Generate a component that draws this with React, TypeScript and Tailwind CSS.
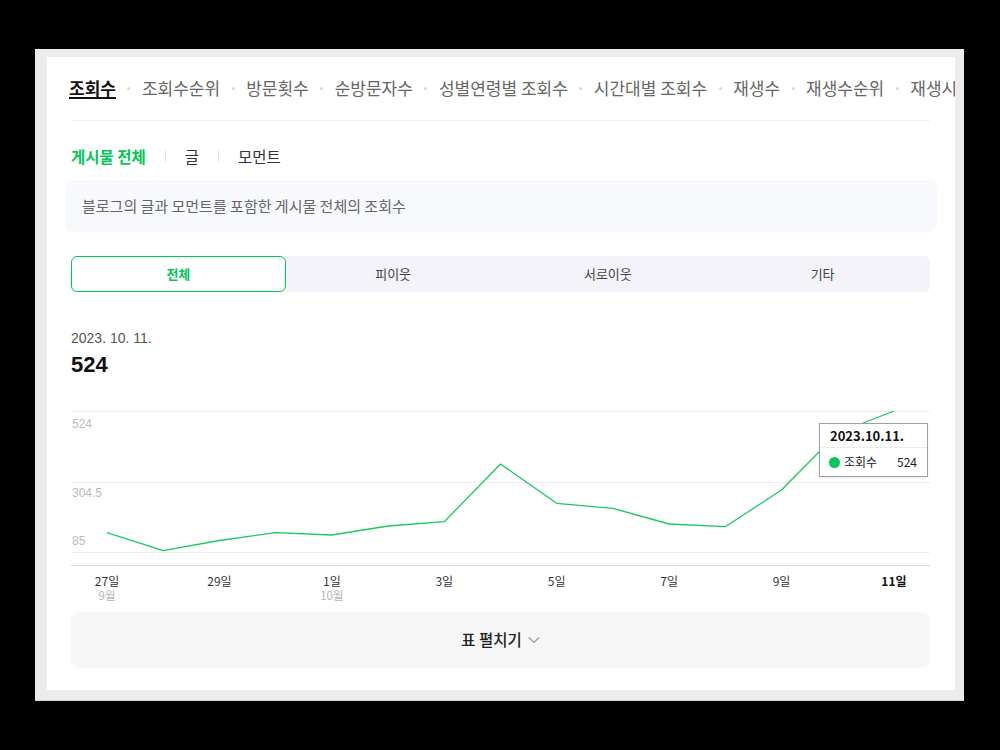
import React from "react";

const navItems = ["조회수", "조회수순위", "방문횟수", "순방문자수", "성별연령별 조회수", "시간대별 조회수", "재생수", "재생수순위", "재생시간"];
const ys = [127.7, 145.7, 135.5, 127.7, 130, 121, 116.7, 59, 98.3, 103.3, 119, 121.7, 85, 28, 6];
const xAt = (i: number) => 36 + i * 56.21;
const xLabels: { i: number; d: string; m?: string; bold?: boolean }[] = [
  { i: 0, d: "27일", m: "9월" },
  { i: 2, d: "29일" },
  { i: 4, d: "1일", m: "10월" },
  { i: 6, d: "3일" },
  { i: 8, d: "5일" },
  { i: 10, d: "7일" },
  { i: 12, d: "9일" },
  { i: 14, d: "11일", bold: true },
];

export default function App() {
  const pts = ys.map((y, i) => `${xAt(i).toFixed(1)},${y}`).join(" ");
  return (
    <div className="w-[1000px] h-[750px] bg-black pt-[49px] pl-[35px]" style={{ fontFamily: '"Noto Sans CJK KR", "Noto Sans", sans-serif' }}>
      <div className="w-[929px] h-[651px] bg-[#ececec] pt-[8px] pl-[12px] shadow-[0_1px_0_#cfcfcf]">
        <div className="w-[908px] h-[633px] bg-white pl-[24px] pr-[25px] overflow-hidden">
          {/* top nav */}
          <div className="-mr-[25px] -ml-[2px] overflow-hidden pt-[21px] pb-[6px]">
            <div className="flex items-center whitespace-nowrap text-[17px] leading-[20px]">
              {navItems.map((t, i) => (
                <React.Fragment key={t}>
                  {i > 0 && <span className="mx-[11.5px] w-[3px] h-[3px] rounded-full bg-[#d5d5d5] shrink-0" />}
                  {i === 0 ? (
                    <span className="font-bold text-[#111] underline decoration-2 underline-offset-[2px]">{t}</span>
                  ) : (
                    <span className="text-[#666]">{t}</span>
                  )}
                </React.Fragment>
              ))}
            </div>
          </div>
          <div className="mt-[16px] border-t border-[#f0f0f0]" />

          {/* sub tabs */}
          <div className="mt-[25px] flex items-center text-[15.5px] leading-[20px]">
            <span className="font-bold text-[#03c75a]">게시물 전체</span>
            <span className="mx-[19px] w-px h-[12px] bg-[#e2e2e2]" />
            <span className="text-[#333]">글</span>
            <span className="mx-[19px] w-px h-[12px] bg-[#e2e2e2]" />
            <span className="text-[#333]">모먼트</span>
          </div>

          {/* info box */}
          <div className="mt-[14px] -ml-[6px] -mr-[7px] h-[52px] rounded-lg bg-[#f8f9fc] pl-[17px] flex items-center text-[15px] text-[#666]">
            블로그의 글과 모먼트를 포함한 게시물 전체의 조회수
          </div>

          {/* segmented */}
          <div className="mt-[24px] h-[36px] rounded-md bg-[#f3f3f9] grid grid-cols-4 text-[13px]">
            <div className="rounded-md bg-white border border-[#03c75a] flex items-center justify-center font-bold text-[#03c75a]">전체</div>
            <div className="flex items-center justify-center text-[#444]">피이웃</div>
            <div className="flex items-center justify-center text-[#444]">서로이웃</div>
            <div className="flex items-center justify-center text-[#444]">기타</div>
          </div>

          {/* value */}
          <div className="mt-[36px] text-[14px] leading-[20px] text-[#555]" style={{ fontFamily: '"Liberation Sans", Arial, sans-serif' }}>2023. 10. 11.</div>
          <div className="mt-[3px] text-[22px] leading-[28px] font-bold text-[#111]" style={{ fontFamily: '"Liberation Sans", Arial, sans-serif' }}>524</div>

          {/* chart */}
          <div className="relative mt-[26px] h-[200px]">
            <svg width="859" height="200" viewBox="0 0 859 200" className="block">
              <line x1="0" x2="859" y1="6.5" y2="6.5" stroke="#eeeeee" />
              <line x1="0" x2="859" y1="77.5" y2="77.5" stroke="#eeeeee" />
              <line x1="0" x2="859" y1="147.5" y2="147.5" stroke="#eeeeee" />
              <line x1="0" x2="859" y1="160.5" y2="160.5" stroke="#dcdcdc" />
              <g fill="#bbbbbb" fontSize="12" style={{ fontFamily: '"Liberation Sans", Arial, sans-serif' }}>
                <text x="1" y="19" dominantBaseline="central">524</text>
                <text x="1" y="88" dominantBaseline="central">304.5</text>
                <text x="1" y="136" dominantBaseline="central">85</text>
              </g>
              <polyline points={pts} fill="none" stroke="#1cc860" strokeWidth="1.3" strokeLinejoin="round" />
              <g fontSize="12" textAnchor="middle">
                {xLabels.map((l) => (
                  <React.Fragment key={l.d}>
                    <text x={xAt(l.i)} y="175.5" dominantBaseline="central" fill={l.bold ? "#111" : "#333"} fontWeight={l.bold ? 700 : 400}>{l.d}</text>
                    {l.m && <text x={xAt(l.i)} y="190" fontSize="11.5" dominantBaseline="central" fill="#b5b5b5">{l.m}</text>}
                  </React.Fragment>
                ))}
              </g>
            </svg>
            <div className="absolute left-[748px] top-[18px] w-[109px] h-[54px] bg-white border border-[#a0a0a0] shadow-[0_1px_2px_rgba(0,0,0,0.08)]">
              <div className="h-[24px] pl-[10px] flex items-center text-[13px] font-bold text-[#111] border-b border-[#ececec]">2023.10.11.</div>
              <div className="h-[28px] pl-[9px] pr-[10px] flex items-center text-[12px] text-[#222]">
                <span className="w-[11px] h-[11px] rounded-full bg-[#03c75a] shrink-0" />
                <span className="ml-[4px]">조회수</span>
                <span className="ml-auto">524</span>
              </div>
            </div>
          </div>

          {/* button */}
          <div className="mt-[7px] h-[56px] rounded-lg bg-[#f7f7f7] flex items-center justify-center gap-[6px] text-[15.5px] font-medium text-[#222]">
            <span>표 펼치기</span>
            <svg width="12" height="8" viewBox="0 0 12 8" fill="none">
              <path d="M1 1.5 6 6.5 11 1.5" stroke="#9a9a9a" strokeWidth="1.2" />
            </svg>
          </div>
        </div>
      </div>
    </div>
  );
}
